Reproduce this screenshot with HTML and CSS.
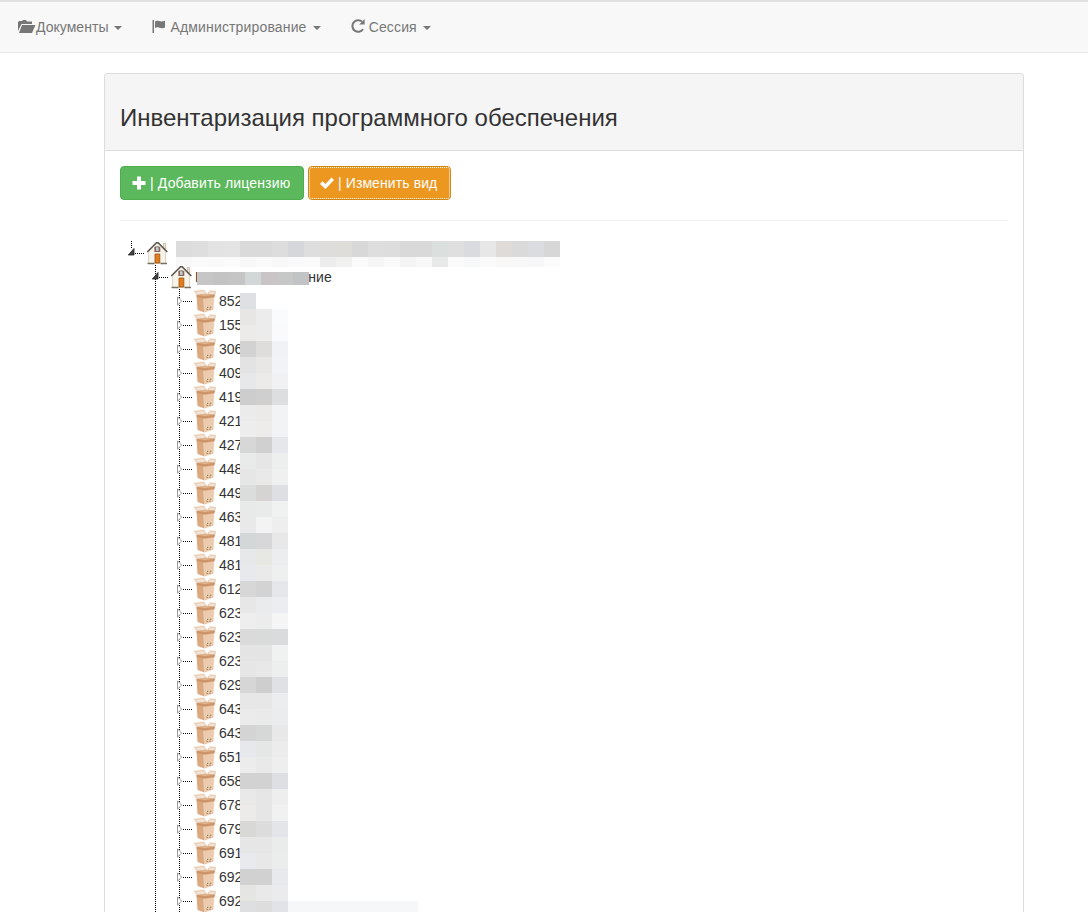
FILE: index.html
```html
<!DOCTYPE html>
<html lang="ru">
<head>
<meta charset="utf-8">
<title>Инвентаризация программного обеспечения</title>
<link rel="stylesheet" href="styles.css">
</head>
<body>
<svg class="defs" aria-hidden="true">
  <symbol id="house" viewBox="0 0 24 24">
    <path d="M19.500 2.500h2.200v6l-2.200-2z" fill="#efe7dc" stroke="#b9a794" stroke-width=".7"/>
    <path d="M4.600 10.500 13.500 2l8 8.500v12H4.600z" fill="#f5f3ea" stroke="#cfc7b4" stroke-width=".7"/>
    <path d="M3.200 11 12.500 1.700h1.700l9.100 9.300" fill="none" stroke="#5c554e" stroke-width="1.500"/>
    <path d="M10.300 6h6v5h-6z" fill="#b4655a"/>
    <path d="M11.500 5.800h3.600v4.600h-3.600z" fill="#c3cbd0" stroke="#5a554f" stroke-width=".7"/>
    <path d="M11 13h4.800v9H11z" fill="#e57e18" stroke="#985019" stroke-width=".8"/>
    <path d="M3.500 22.500h7m6 0h6.500" stroke="#777260" stroke-width="1.300"/>
  </symbol>
  <symbol id="box" viewBox="0 0 24 24">
    <path d="M4.500 6.500h8V23.500L5.500 21z" fill="#dba980"/>
    <path d="M11 7h11.300l-.8 13.800-9.500 2.700z" fill="#ecccaf"/>
    <path d="m2.300 2.300 9.700-1 2.500 3.500-8.800 2z" fill="#f3e0d0" stroke="#dcb998" stroke-width=".7"/>
    <path d="m15.800 4.800 2.200-3 5.600.7-1.100 4z" fill="#f3e0d0" stroke="#dcb998" stroke-width=".7"/>
    <path d="m4.500 6 8.500-.9 10.200.6-.7 2.600-9.700 1.400-8-1.500z" fill="#cd966a"/>
    <path d="m6 6 7.500-.9 7.500.7-8 1.200z" fill="#dfb792"/>
    <path d="M15 18.500h1.200m1.800-.3h1.200M14.500 20.500h1.200m1.600-.3h1.300" stroke="#8f6848"/>
  </symbol>
  <symbol id="opened" viewBox="0 0 24 24">
    <path d="M14 7.500V14H8.300z" fill="#444" stroke="#222" stroke-width=".8"/>
    <path d="M15 12.500h9" stroke="#000" stroke-dasharray="1 1"/>
  </symbol>
  <symbol id="closed" viewBox="0 0 24 24">
    <path d="M9.500 7.800v8.400l4.200-4.200z" fill="#fff" stroke="#9b9b9b"/>
    <path d="M15 12.500h9" stroke="#000" stroke-dasharray="1 1"/>
  </symbol>
</svg>

<nav class="navbar">
  <a class="nav-link"><svg class="glyph glyph-folder" viewBox="0 0 18 14"><path d="M0 11V2.200L1 1h3l1-1h3l1 1.500h5V4H3.500z"/><path d="M4 5h13.500L14 13H1z"/></svg>Документы <b class="caret"></b></a>
  <a class="nav-link"><svg class="glyph" viewBox="0 0 14 14"><path d="M.5 0H2v13H.5zM3 1.500C6-.5 8 3 13 .8v6.700C8.500 9.500 6 6 3 8z"/></svg> Администрирование <b class="caret"></b></a>
  <a class="nav-link"><svg class="glyph glyph-reload" viewBox="0 0 14 14"><path d="M12 10.300A5.800 5.800 0 1 1 11 2.600" fill="none" stroke="#777" stroke-width="2"/><path d="M13.600 0v5.500H8.200z"/></svg> Сессия <b class="caret"></b></a>
</nav>

<main class="panel">
  <header class="panel-heading"><h3>Инвентаризация программного обеспечения</h3></header>
  <div class="panel-body">
    <div class="toolbar">
      <button class="btn btn-success"><svg class="glyph" viewBox="0 0 14 14"><path d="M5 .5h4V5h4.500v4H9v4.500H5V9H.5V5H5z"/></svg> | Добавить лицензию</button>
      <button class="btn btn-warning"><svg class="glyph" viewBox="0 0 14 14"><path d="m0 8 2.500-2.700 3 2.700 6-6.500L14 4 5.500 13z"/></svg> | Изменить вид</button>
    </div>
    <hr>
    <div class="tree">
      <div class="node root">
        <svg class="ocl"><use href="#opened"/></svg><svg class="icon"><use href="#house"/></svg>
        <div class="mosaic mosaic-title" id="title-mask"></div>
      </div>
      <div class="branch">
        <div class="node">
          <svg class="ocl"><use href="#opened"/></svg><svg class="icon"><use href="#house"/></svg>
          <span class="label">В<span class="mosaic mosaic-name" id="name-mask"></span>ние</span>
        </div>
        <div class="branch leaves">
          <div id="items"></div>
          <div class="mosaic mosaic-items" id="items-mask"></div>
          <div class="mask-tail"></div>
        </div>
      </div>
    </div>
  </div>
</main>
<script src="tree.js"></script>
</body>
</html>
```
FILE: styles.css
```css
* { box-sizing: border-box; }
body {
  margin: 0;
  background: #fff;
  color: #333;
  font: 14px/20px "Liberation Sans", Arial, sans-serif;
}
.defs { position: absolute; width: 0; height: 0; }
.navbar {
  display: flex;
  height: 53px;
  padding-left: 3px;
  background: #f8f8f8;
  border-top: 2px solid #e1e1e1;
  border-bottom: 1px solid #e7e7e7;
}
.nav-link { padding: 15px; color: #777; letter-spacing: .15px; white-space: nowrap; }
.nav-link:first-child { letter-spacing: .04px; }
.glyph { width: 14px; height: 14px; fill: currentColor; vertical-align: -2px; }
.glyph-folder { width: 18px; }
.glyph-reload { vertical-align: -1px; }
.caret {
  display: inline-block;
  margin-left: 2px;
  vertical-align: middle;
  border-top: 4px solid;
  border-left: 4px solid transparent;
  border-right: 4px solid transparent;
}
.panel {
  width: 920px;
  height: 839px;
  margin: 20px 0 0 104px;
  border: 1px solid #ddd;
  border-bottom: 0;
  border-radius: 4px 4px 0 0;
}
.panel-heading {
  height: 77px;
  padding: 30px 15px 0;
  background: #f5f5f5;
  border-bottom: 1px solid #ddd;
  border-radius: 3px 3px 0 0;
}
h3 { margin: 0; font-size: 24px; font-weight: 400; line-height: 27px; }
.panel-body { padding: 15px 15px 0; }
.toolbar { display: flex; gap: 4px; }
.btn {
  height: 34px;
  padding: 0 11px;
  border: 1px solid;
  border-radius: 4px;
  color: #fff;
  font: inherit;
  text-align: left;
  white-space: nowrap;
}
.btn-success { width: 184px; background: #5cb85c; border-color: #4cae4c; letter-spacing: .15px; }
.btn-warning {
  width: 143px;
  background: #ec971f;
  border-color: #d58512;
  letter-spacing: .1px;
  outline: 1px dotted #fff;
  outline-offset: -2px;
}
hr { height: 1px; margin: 20px 0; border: 0; background: #eee; }
.node { display: flex; height: 24px; }
.root {
  background: repeating-linear-gradient(#000 0 1px, transparent 1px 2px) 11px 0 / 1px 8px no-repeat;
}
.ocl, .icon { flex: none; width: 24px; height: 24px; }
.label { display: flex; padding-left: 3px; line-height: 24px; }
.branch {
  margin-left: 24px;
  background: repeating-linear-gradient(#000 0 1px, transparent 1px 2px) 11px 0 / 1px 100% no-repeat;
}
.leaves { position: relative; height: 623px; overflow: hidden; }
.mosaic { display: grid; grid-auto-rows: 16px; }
.mosaic-title {
  height: 26px;
  margin-left: 8px;
  grid-template: 16px 10px / repeat(24, 16px);
}
.mosaic-name {
  position: relative;
  z-index: 1;
  width: 112px;
  height: 13px;
  margin: 7px -1px 0 -7px;
  grid-template: 13px / repeat(7, 16px);
}
.mosaic-items {
  position: absolute;
  top: 4px;
  left: 72px;
  grid-template-columns: repeat(3, 16px);
}
.mask-tail {
  position: absolute;
  top: 612px;
  left: 120px;
  width: 130px;
  height: 16px;
  background: #f6f7f9;
}
```
FILE: tree.js
```js
const numbers = ['852', '155', '306', '409', '419', '421', '427', '448', '449', '463', '481', '481', '612',
  '623', '623', '623', '629', '643', '643', '651', '658', '678', '679', '691', '692', '692'];
document.getElementById('items').innerHTML = numbers.map(n =>
  `<div class="node"><svg class="ocl"><use href="#closed"/></svg><svg class="icon"><use href="#box"/></svg><span class="label">${n}</span></div>`
).join('');

function paint(id, colors) {
  document.getElementById(id).innerHTML = colors.trim().split(/\s+/)
    .map(c => `<i style="background:${c === '-' ? 'transparent' : '#' + c}"></i>`).join('');
}

paint('title-mask', `
  dcdcdc dedede e3e3e3 e4e4e4 dadada dadada dddddd d6d7da dedede dedddc deddda d8d8d8
  dedede dddddd d9d9d9 d9d9d9 dbdfde dfdfdf dadbde e7e7e7 dedbd8 dadada dbdcdf d7d7d7
  f8f8f8 fafafa f9f9f9 fbfbfb f8f8f8 fafafa f8f8f9 fafafa fafafa ededed f1f1f1 fafafa
  f6f6f6 fafafa f4f4f4 f8f8f8 e8e8e8 fafafa f7f9f9 fafafa f8f8f8 f8f8f8 f7f7f8 fbfbfb`);

paint('name-mask', 'c6c6c6 c3c3c3 c5c5c5 d4d7d7 c9c5c6 c6c7c6 c2c3c5');

paint('items-mask', `
  dfe0e3 - -
  e8e6e4 ececec fafbfd  ecebea ececec fafafd  d2d2d2 dedddc f1f2f6
  e3e3e3 e9e7e5 f2f3f6  e7e8ea ecebe9 f1f1f3  cdcdcd cfcfcf dddee0
  ebebeb ebeae8 f2f3f5  ededed edecea f2f3f5  d7d7d7 d0d0d0 e6e7ea
  e9ebea e6e6e6 edefee  e6e6e6 e9e9ea f0f0f0  dbdddc d6d4d2 dedfe2
  e8eae9 e9eaea f0f2f1  e9e9e9 f3f3f3 eeeeee  d3d7d8 d7d7d9 e8e8e8
  e7e8ea e7e7e4 ecedef  e8e9ec eaeaea eef0ef  d7d7d7 d3d3d3 e5e7ea
  e7e7e7 eaebec ecedf0  eeeeee ececec f5f5f5  dadada d9dada d9dbdd
  e4e4e4 e4e4e4 f0f2f1  e6e6e6 e8e8e8 edefee  d6d6d6 cecece e0e1e4
  e7e7e7 e7e7e7 ecedef  ebebeb eaeaea ebecee  d4d4d4 d6d8d7 e8e8e8
  e6e8ec e4e7e6 ececec  ececec e8e9e8 eeeeee  d2d2d2 d2d2d2 dedfe2
  e9e9ea e6e6e6 eeeeee  ecebe9 e6e6e7 f1f1f1  d8d8d6 dcdcdc e4e5e8
  e6e6e6 e6e6e6 eaecec  e9eaed e8e8e8 ebedec  d1d1d1 d1d1d1 e8e9ec
  e5e5e3 e9e9ea ebebed  dddfe1 dddddd e2e3e8`);
```
